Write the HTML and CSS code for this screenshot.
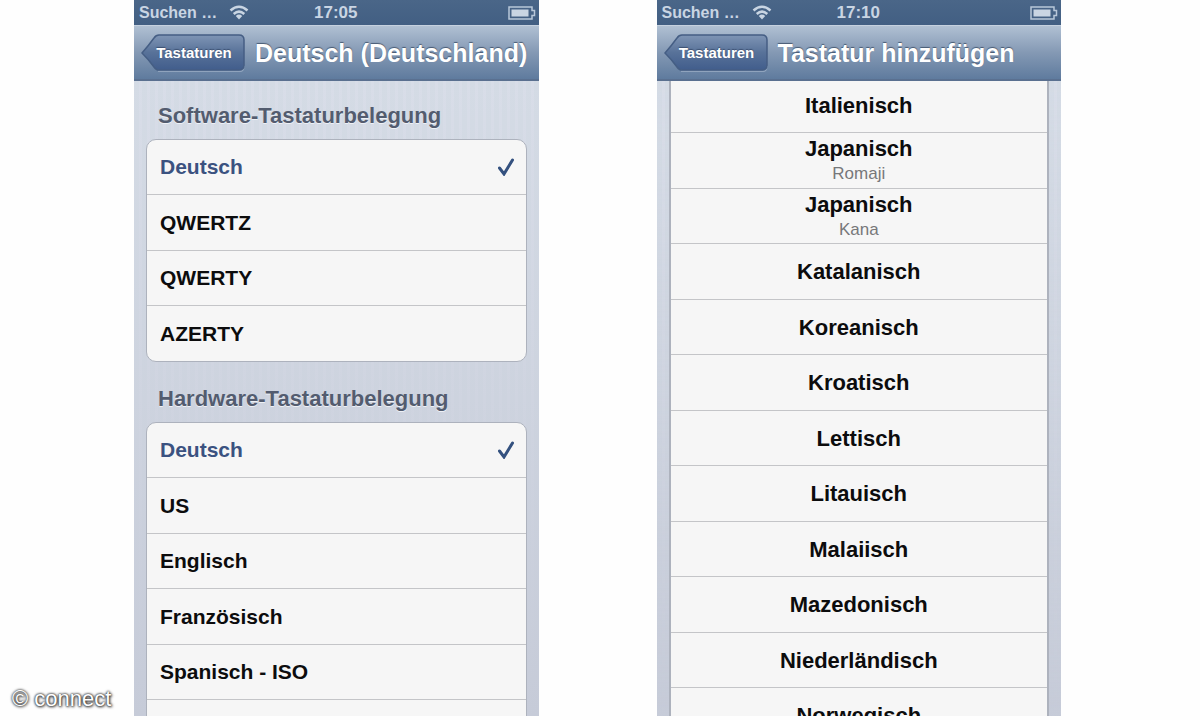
FILE: index.html
```
<!DOCTYPE html>
<html lang="de">

<head>
  <meta charset="UTF-8">
  <meta name="viewport" content="width=device-width, initial-scale=1.0">
  <title>Tastaturen</title>
  <link rel="stylesheet" href="styles.css">
</head>

<body>

  <div class="container">

    <section class="phone">
      <div class="status-bar">
        <span class="carrier">Suchen …</span>
        <svg class="wifi" viewBox="0 0 20 15">
          <path d="M1.500 5.500Q10-2 18.500 5.500M4.700 9Q10 4.200 15.300 9" />
          <path class="dot" d="M6.800 11Q10 8.200 13.200 11L10 14.500Z" />
        </svg>
        <span class="time">17:05</span>
        <svg class="battery" viewBox="0 0 28 14">
          <path d="M1 1H24V4.500H26.500V9.500H24V13H1Z" />
          <rect x="3.500" y="3.500" width="17" height="7" />
        </svg>
      </div>
      <header class="nav-bar">
        <button class="back" type="button">
          <svg viewBox="0 0 104 38">
            <defs>
              <linearGradient id="back-fill" x1="0" y1="0" x2="0" y2="1">
                <stop offset="0" stop-color="#7f95b5" />
                <stop offset="0.500" stop-color="#587299" />
                <stop offset="1" stop-color="#415d8c" />
              </linearGradient>
            </defs>
            <path class="shine" d="M17 37.500H98Q103 37.500 103 32" />
            <path fill="url(#back-fill)" d="M1 19Q8 11 13 4Q15 1 18 1H98Q103 1 103 6V31Q103 36 98 36H18Q15 36 13 33Q8 26 1 19Z" />
          </svg>
          <span>Tastaturen</span>
        </button>
        <h1>Deutsch (Deutschland)</h1>
      </header>
      <main class="settings">
        <h2>Software-Tastaturbelegung</h2>
        <div class="group">
          <label class="row"><span>Deutsch</span><input type="radio" name="software" checked><svg class="check" viewBox="0 0 18 18"><path d="M2.500 10L7 16L15.500 2" /></svg></label>
          <label class="row"><span>QWERTZ</span><input type="radio" name="software"><svg class="check" viewBox="0 0 18 18"><path d="M2.500 10L7 16L15.500 2" /></svg></label>
          <label class="row"><span>QWERTY</span><input type="radio" name="software"><svg class="check" viewBox="0 0 18 18"><path d="M2.500 10L7 16L15.500 2" /></svg></label>
          <label class="row"><span>AZERTY</span><input type="radio" name="software"><svg class="check" viewBox="0 0 18 18"><path d="M2.500 10L7 16L15.500 2" /></svg></label>
        </div>
        <h2>Hardware-Tastaturbelegung</h2>
        <div class="group">
          <label class="row"><span>Deutsch</span><input type="radio" name="hardware" checked><svg class="check" viewBox="0 0 18 18"><path d="M2.500 10L7 16L15.500 2" /></svg></label>
          <label class="row"><span>US</span><input type="radio" name="hardware"><svg class="check" viewBox="0 0 18 18"><path d="M2.500 10L7 16L15.500 2" /></svg></label>
          <label class="row"><span>Englisch</span><input type="radio" name="hardware"><svg class="check" viewBox="0 0 18 18"><path d="M2.500 10L7 16L15.500 2" /></svg></label>
          <label class="row"><span>Französisch</span><input type="radio" name="hardware"><svg class="check" viewBox="0 0 18 18"><path d="M2.500 10L7 16L15.500 2" /></svg></label>
          <label class="row"><span>Spanisch - ISO</span><input type="radio" name="hardware"><svg class="check" viewBox="0 0 18 18"><path d="M2.500 10L7 16L15.500 2" /></svg></label>
          <div class="row"></div>
        </div>
      </main>
    </section>

    <section class="phone">
      <div class="status-bar">
        <span class="carrier">Suchen …</span>
        <svg class="wifi" viewBox="0 0 20 15">
          <path d="M1.500 5.500Q10-2 18.500 5.500M4.700 9Q10 4.200 15.300 9" />
          <path class="dot" d="M6.800 11Q10 8.200 13.200 11L10 14.500Z" />
        </svg>
        <span class="time">17:10</span>
        <svg class="battery" viewBox="0 0 28 14">
          <path d="M1 1H24V4.500H26.500V9.500H24V13H1Z" />
          <rect x="3.500" y="3.500" width="17" height="7" />
        </svg>
      </div>
      <header class="nav-bar">
        <button class="back" type="button">
          <svg viewBox="0 0 104 38">
            <path class="shine" d="M17 37.500H98Q103 37.500 103 32" />
            <path fill="url(#back-fill)" d="M1 19Q8 11 13 4Q15 1 18 1H98Q103 1 103 6V31Q103 36 98 36H18Q15 36 13 33Q8 26 1 19Z" />
          </svg>
          <span>Tastaturen</span>
        </button>
        <h1>Tastatur hinzufügen</h1>
      </header>
      <main class="settings">
        <div class="languages">
          <button class="row" type="button">Italienisch</button>
          <button class="row" type="button">Japanisch<small>Romaji</small></button>
          <button class="row" type="button">Japanisch<small>Kana</small></button>
          <button class="row" type="button">Katalanisch</button>
          <button class="row" type="button">Koreanisch</button>
          <button class="row" type="button">Kroatisch</button>
          <button class="row" type="button">Lettisch</button>
          <button class="row" type="button">Litauisch</button>
          <button class="row" type="button">Malaiisch</button>
          <button class="row" type="button">Mazedonisch</button>
          <button class="row" type="button">Niederländisch</button>
          <button class="row" type="button">Norwegisch</button>
        </div>
      </main>
    </section>

  </div>

  <div class="credit">© connect</div>

</body>

</html>
```
FILE: styles.css
```
* {
  box-sizing: border-box;
}

body {
  margin: 0;
  background-color: #fefefe;
  font-family: "Liberation Sans", Arial, sans-serif;
}

.container {
  display: flex;
  gap: 118px;
  padding: 0 139px 4px 134px;
}

.phone {
  flex: 1;
  min-width: 0;
  height: calc(100vh - 4px);
  display: flex;
  flex-direction: column;
  overflow: hidden;
}

/* status bar */
.status-bar {
  height: 25px;
  flex: none;
  display: grid;
  grid-template-columns: 90px 20px 1fr 28px;
  align-items: center;
  padding: 0 3px 0 5px;
  background: linear-gradient(#4a6688, #425f83);
  color: #c9d5e3;
  font-size: 17px;
  font-weight: bold;
}

.carrier {
  font-size: 16px;
}

.time {
  padding-left: 65px;
}

.wifi {
  width: 20px;
  height: 15px;
}

.wifi path {
  fill: none;
  stroke: #c9d5e3;
  stroke-width: 2.5;
}

.wifi .dot {
  fill: #c9d5e3;
  stroke: none;
}

.battery {
  width: 28px;
  height: 14px;
}

.battery path {
  fill: none;
  stroke: #b8c7d9;
  stroke-width: 1.5;
}

.battery rect {
  fill: #c9d5e3;
}

/* navigation bar */
.nav-bar {
  height: 56px;
  flex: none;
  display: flex;
  align-items: center;
  gap: 10px;
  padding-left: 7px;
  border-top: 1px solid #c5d1df;
  border-bottom: 2px solid #5a7090;
  background: linear-gradient(#b0c0d3, #8499b4 50%, #5f7b9e);
}

.nav-bar h1 {
  margin: 0;
  color: #fff;
  font-size: 25px;
  line-height: 32px;
  white-space: nowrap;
  text-shadow: 0 -1px 1px #485a73;
}

.back {
  position: relative;
  width: 104px;
  height: 38px;
  flex: none;
  padding: 0 0 0 2px;
  border: none;
  background: none;
  color: #fff;
  font-family: inherit;
  font-size: 15px;
  font-weight: bold;
  text-shadow: 0 -1px 1px #3b4f70;
  cursor: pointer;
}

.back svg {
  position: absolute;
  top: 0;
  left: 0;
  width: 100%;
  height: 100%;
}

.back path {
  stroke: #455e84;
  stroke-width: 1.5;
}

.back .shine {
  fill: none;
  stroke: #8fa3bd;
}

.back span {
  position: relative;
}

/* content */
.settings {
  flex: 1;
  min-height: 0;
  padding: 0 12px;
  overflow: hidden;
  background:
    linear-gradient(rgba(198, 203, 216, 0), #c6cbd8),
    repeating-linear-gradient(90deg, #d4dbe5 0, #d4dbe5 5px, #d8dde8 5px, #d8dde8 8px);
}

.settings h2 {
  margin: 0;
  padding: 22px 12px 10px;
  color: #535c6f;
  font-size: 22px;
  line-height: 26px;
  text-shadow: 0 1px 0 #eef1f6;
}

.group {
  border: 1px solid #adb2bd;
  border-radius: 10px;
  background-color: #f6f6f6;
  overflow: hidden;
}

.group + h2 {
  padding-top: 24px;
}

.row {
  height: 55px;
  border-bottom: 1px solid #c4c5c8;
  color: #0c0c0d;
  font-size: 21px;
  font-weight: bold;
  line-height: 26px;
}

.row:nth-child(even) {
  height: 56px;
}

.group .row {
  display: flex;
  align-items: center;
  justify-content: space-between;
  padding: 0 11px 0 13px;
}

.group .row:last-child {
  height: 55px;
  border-bottom: none;
}

.row:has(input:checked) {
  color: #3b5280;
}

.row input {
  appearance: none;
  margin: 0 0 0 auto;
}

.check {
  display: none;
  width: 18px;
  height: 18px;
}

.row input:checked + .check {
  display: block;
}

.check path {
  fill: none;
  stroke: #34517f;
  stroke-width: 3;
  stroke-linecap: round;
}

.languages {
  margin-top: -3px;
  border: 1px solid #adb2bd;
  border-width: 0 2px;
}

.languages .row {
  display: flex;
  flex-direction: column;
  align-items: center;
  justify-content: center;
  width: 100%;
  padding: 1px 0 0;
  border-width: 0 0 1px;
  border-style: solid;
  border-color: #c4c5c8;
  background-color: #f6f6f6;
  font-family: inherit;
  font-size: 22px;
}

.row small {
  color: #77787a;
  font-size: 17px;
  font-weight: normal;
  line-height: 24px;
}

/* photo credit lies over the page */
.credit {
  position: absolute;
  left: 12px;
  bottom: 8px;
  color: #fff;
  font-size: 22px;
  line-height: 26px;
  text-shadow: 0 0 2px #222, 0 0 3px #444, 1px 1px 3px #555;
}
```
